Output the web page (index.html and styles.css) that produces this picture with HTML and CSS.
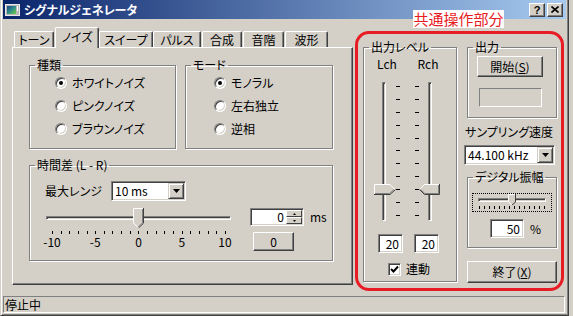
FILE: index.html
```html
<!DOCTYPE html>
<html lang="ja">
<head>
  <meta charset="UTF-8">
  <title>シグナルジェネレータ</title>
  <link rel="stylesheet" href="styles.css">
</head>
<body>
  <div class="window">
    <div class="titlebar">
      <svg class="app-icon" width="15" height="12" viewBox="0 0 15 12">
        <defs>
          <linearGradient id="iconGrad" x1="0" y1="0" x2="1" y2="1">
            <stop offset="0" stop-color="#1c3f8c"/>
            <stop offset="0.5" stop-color="#2f8f8a"/>
            <stop offset="1" stop-color="#6fcf3f"/>
          </linearGradient>
        </defs>
        <rect x="0.5" y="0.5" width="14" height="11" fill="#b8b8b8" stroke="#e8e8e8"/>
        <rect x="2" y="2" width="9" height="8" fill="url(#iconGrad)"/>
        <rect x="12" y="2" width="1" height="5" fill="#fff"/>
      </svg>
      <span class="title">シグナルジェネレータ</span>
      <div class="caption-btns">
        <span class="cap-btn help">?</span>
        <span class="cap-btn">
          <svg width="8" height="7" viewBox="0 0 8 7"><path d="M0.5 0.5L7.5 6.5M7.5 0.5L0.5 6.5" stroke="#000" stroke-width="1.6"/></svg>
        </span>
      </div>
    </div>

    <div class="note">共通操作部分</div>

    <div class="client">
      <!-- tab control -->
      <div class="tabctl">
        <div class="tabs">
          <div class="tab">トーン</div>
          <div class="tab active">ノイズ</div>
          <div class="tab">スイープ</div>
          <div class="tab">パルス</div>
          <div class="tab">合成</div>
          <div class="tab">音階</div>
          <div class="tab">波形</div>
        </div>

        <div class="panel">
          <div class="panel-row">
            <fieldset class="group g-kind">
              <legend>種類</legend>
              <div class="radios">
                <label class="radio"><span class="radio-box checked"></span>ホワイトノイズ</label>
                <label class="radio"><span class="radio-box"></span>ピンクノイズ</label>
                <label class="radio"><span class="radio-box"></span>ブラウンノイズ</label>
              </div>
            </fieldset>

            <fieldset class="group g-mode">
              <legend>モード</legend>
              <div class="radios">
                <label class="radio"><span class="radio-box checked"></span>モノラル</label>
                <label class="radio"><span class="radio-box"></span>左右独立</label>
                <label class="radio"><span class="radio-box"></span>逆相</label>
              </div>
            </fieldset>
          </div>

          <fieldset class="group g-delay">
            <legend>時間差 (L - R)</legend>
            <div class="delay-body">
              <div class="range-row">
                <span class="range-label">最大レンジ</span>
                <div class="combo combo-range">
                  <span class="combo-text">10 ms</span>
                  <span class="combo-btn">
                    <svg width="7" height="4" viewBox="0 0 7 4"><path d="M0 0H7L3.5 4Z" fill="#000"/></svg>
                  </span>
                </div>
              </div>

              <div class="slider-row">
                <div class="hslider-wrap">
                  <div class="hslider">
                    <div class="htrack"></div>
                    <svg class="hthumb" style="left: 87px" width="11" height="20" viewBox="0 0 11 20">
                      <path d="M0 0H11V15L5.5 20L0 15Z" fill="#d4d0c8"/>
                      <path d="M0.5 15V0.5H10" stroke="#fff" fill="none"/>
                      <path d="M10.5 0V15.2L5.5 20" stroke="#404040" fill="none"/>
                      <path d="M9.5 1V14.8L5.3 19" stroke="#808080" fill="none"/>
                      <path d="M0.5 15L4.8 19.3" stroke="#fff" fill="none"/>
                    </svg>
                  </div>
                  <div class="hticks">
                    <i></i><i></i><i></i><i></i><i></i><i></i><i></i><i></i><i></i><i></i><i></i>
                    <i></i><i></i><i></i><i></i><i></i><i></i><i></i><i></i><i></i><i></i>
                  </div>
                  <div class="hlabels">
                    <span>-10</span><span>-5</span><span>0</span><span>5</span><span>10</span>
                  </div>
                </div>

                <div class="spin-col">
                  <div class="spin-line">
                    <div class="spin">
                      <span class="spin-val">0</span>
                      <span class="spin-btns">
                        <span class="spin-btn"><svg width="3" height="2" viewBox="0 0 3 2"><path d="M1.5 0L3 2H0Z" fill="#000"/></svg></span>
                        <span class="spin-btn"><svg width="3" height="2" viewBox="0 0 3 2"><path d="M0 0H3L1.5 2Z" fill="#000"/></svg></span>
                      </span>
                    </div>
                    <span class="unit">ms</span>
                  </div>
                  <div class="btn btn-zero">0</div>
                </div>
              </div>
            </div>
          </fieldset>
        </div>
      </div>

      <!-- common controls (annotated in red) -->
      <div class="common">
        <fieldset class="group g-level">
          <legend>出力レベル</legend>
          <div class="ch-labels"><span>Lch</span><span>Rch</span></div>
          <div class="vsliders">
            <div class="vslider">
              <div class="vtrack"></div>
              <svg class="vthumb" style="top: 102px" width="22" height="11" viewBox="0 0 22 11">
                <path d="M0 0H16L21.5 5.5L16 11H0Z" fill="#d4d0c8"/>
                <path d="M0.5 10V0.5H16L21 5.5" stroke="#fff" fill="none"/>
                <path d="M0 10.5H16L21.5 5.5" stroke="#404040" fill="none"/>
                <path d="M1 9.5H15.6L20 5.5" stroke="#808080" fill="none"/>
              </svg>
            </div>
            <div class="dashes">
              <i></i><i></i><i></i><i></i><i></i><i></i><i></i><i></i><i></i><i></i><i></i>
            </div>
            <div class="dashes dashes-r">
              <i></i><i></i><i></i><i></i><i></i><i></i><i></i><i></i><i></i><i></i><i></i>
            </div>
            <div class="vslider vslider-r">
              <div class="vtrack"></div>
              <svg class="vthumb" style="top: 102px" width="21" height="11" viewBox="0 0 21 11">
                <path d="M21 0H5.5L0 5.5L5.5 11H21Z" fill="#d4d0c8"/>
                <path d="M5.5 0.5H20.5M5.5 0.5L0.5 5.5" stroke="#fff" fill="none"/>
                <path d="M20.5 0V10.5H5.5L0.5 5.5" stroke="#404040" fill="none"/>
                <path d="M19.5 1V9.5H5.9L1.5 5.5" stroke="#808080" fill="none"/>
              </svg>
            </div>
          </div>
          <div class="level-edits">
            <div class="edit">20</div>
            <div class="edit">20</div>
          </div>
          <label class="link">
            <span class="check">
              <svg width="9" height="9" viewBox="0 0 9 9"><path d="M1 4L3.5 6.5L8 1.5" stroke="#000" stroke-width="2" fill="none"/></svg>
            </span>
            連動
          </label>
        </fieldset>

        <div class="side">
          <fieldset class="group g-out">
            <legend>出力</legend>
            <div class="btn btn-start">開始(<u>S</u>)</div>
            <div class="indicator"></div>
          </fieldset>

          <div class="rate-label">サンプリング速度</div>
          <div class="combo combo-rate">
            <span class="combo-text">44.100 kHz</span>
            <span class="combo-btn">
              <svg width="7" height="4" viewBox="0 0 7 4"><path d="M0 0H7L3.5 4Z" fill="#000"/></svg>
            </span>
          </div>

          <fieldset class="group g-amp">
            <legend>デジタル振幅</legend>
            <div class="amp-focus">
              <div class="amp-track"></div>
              <svg class="amp-thumb" style="left: 35px" width="8" height="11" viewBox="0 0 8 11">
                <path d="M0 0H8V8L4 11L0 8Z" fill="#d4d0c8"/>
                <path d="M0.5 8V0.5H7" stroke="#fff" fill="none"/>
                <path d="M7.5 0V8.2L4 11" stroke="#404040" fill="none"/>
                <path d="M0.5 8L3.5 10.5" stroke="#fff" fill="none"/>
              </svg>
              <div class="amp-ticks">
                <i></i><i></i><i></i><i></i><i></i><i></i><i></i><i></i><i></i><i></i><i></i><i></i><i></i><i></i>
              </div>
            </div>
            <div class="amp-line">
              <div class="edit edit-amp">50</div>
              <span class="unit">%</span>
            </div>
          </fieldset>

          <div class="btn btn-quit">終了(<u>X</u>)</div>
        </div>
      </div>
    </div>

    <div class="statusbar">停止中</div>
  </div>
</body>
</html>
```

FILE: styles.css
```css
* {
  box-sizing: border-box;
  margin: 0;
  padding: 0;
}

body {
  background: #d4d0c8;
  font-family: "Noto Sans CJK JP", "Noto Sans", sans-serif;
  font-size: 12px;
  line-height: 14px;
  font-feature-settings: "palt";
  color: #000;
}

.window {
  position: relative;
  width: 569px;
  height: 316px;
  display: flex;
  flex-direction: column;
  background: #d4d0c8;
  border-left: 1px solid #d4d0c8;
  border-right: 1px solid #404040;
  border-bottom: 1px solid #404040;
  box-shadow: inset 1px 0 #fff, inset -1px -1px #808080;
  padding: 0 2px 2px 2px;
}

/* title bar */
.titlebar {
  height: 19px;
  flex-shrink: 0;
  display: flex;
  align-items: center;
  padding: 0 3px 0 2px;
  background: linear-gradient(to right, #0a246a, #a6caf0);
  color: #fff;
}

.app-icon {
  margin-right: 4px;
}

.title {
  font-weight: bold;
}

.caption-btns {
  margin-left: auto;
  display: flex;
  gap: 2px;
}

.cap-btn {
  width: 16px;
  height: 14px;
  display: flex;
  align-items: center;
  justify-content: center;
  background: #d4d0c8;
  border: 1px solid;
  border-color: #fff #404040 #404040 #fff;
  box-shadow: inset -1px -1px #808080;
  color: #000;
}

.cap-btn.help {
  font-family: "Liberation Sans", sans-serif;
  font-weight: bold;
  font-size: 11px;
}

.note {
  position: absolute;
  top: 10px;
  left: 412px;
  width: 91px;
  height: 18px;
  background: #fff;
  color: #e81c24;
  font-size: 15px;
  line-height: 18px;
  text-align: center;
  font-feature-settings: normal;
}

/* client area */
.client {
  flex: 1;
  display: flex;
  align-items: flex-start;
  padding: 8px 0 0 9px;
}

.tabctl {
  width: 341px;
}

.tabs {
  display: flex;
  align-items: flex-end;
  height: 20px;
  position: relative;
  z-index: 1;
}

.tab {
  height: 16px;
  border: 1px solid #fff;
  border-bottom: none;
  border-right-color: #404040;
  border-radius: 2px 2px 0 0;
  box-shadow: inset -1px 0 #808080;
  text-align: center;
  line-height: 15px;
  background: #d4d0c8;
}

.tab:nth-child(1) { width: 40px; margin-left: 2px; }
.tab:nth-child(2) { width: 44px; margin-left: 1px; }
.tab:nth-child(3) { width: 54px; }
.tab:nth-child(4) { width: 48px; }
.tab:nth-child(5) { width: 40px; margin-left: 1px; }
.tab:nth-child(6) { width: 41px; margin-left: 1px; }
.tab:nth-child(7) { width: 43px; margin-left: 1px; }

.tab.active {
  height: 21px;
  margin-bottom: -1px;
  padding-top: 1px;
}

.panel {
  height: 238px;
  border: 1px solid;
  border-color: #fff #404040 #404040 #fff;
  box-shadow: inset -1px -1px #808080;
  padding: 10px 0 0 16px;
}

.panel-row {
  display: flex;
  gap: 9px;
}

/* group boxes */
.group {
  border: 1px solid #808080;
  box-shadow: inset 1px 1px #fff, 1px 1px #fff;
  padding: 0;
  min-width: 0;
}

.group legend {
  margin-left: 5px;
  padding: 0 2px;
  line-height: 14px;
}

.g-kind { width: 147px; height: 91px; }
.g-mode { width: 148px; height: 91px; }
.g-delay { width: 304px; height: 103px; margin-top: 9px; }

.radios {
  margin-top: -1px;
  padding-left: 25px;
}

.g-mode .radios {
  padding-left: 28px;
}

.radio {
  height: 23px;
  display: flex;
  align-items: center;
}

.radio-box {
  width: 12px;
  height: 12px;
  margin-right: 5px;
  border-radius: 50%;
  background: #fff;
  border: 1px solid;
  border-color: #808080 #fff #fff #808080;
  box-shadow: inset 1px 1px #404040, inset -1px -1px #d4d0c8;
  display: flex;
  align-items: center;
  justify-content: center;
}

.radio-box.checked::after {
  content: '';
  width: 4px;
  height: 4px;
  border-radius: 50%;
  background: #000;
}

/* time difference group */
.delay-body {
  padding: 9px 0 0 15px;
}

.range-row {
  display: flex;
  align-items: center;
}

.range-label {
  width: 66px;
}

.combo {
  height: 20px;
  display: flex;
  background: #fff;
  border: 1px solid;
  border-color: #808080 #fff #fff #808080;
  box-shadow: inset 1px 1px #404040, inset -1px -1px #d4d0c8;
  padding: 1px;
}

.combo-range { width: 75px; }

.combo-text {
  flex: 1;
  padding-left: 2px;
  line-height: 16px;
}

.combo-btn {
  width: 16px;
  display: flex;
  align-items: center;
  justify-content: center;
  background: #d4d0c8;
  border: 1px solid;
  border-color: #d4d0c8 #404040 #404040 #d4d0c8;
  box-shadow: inset 1px 1px #fff, inset -1px -1px #808080;
}

.slider-row {
  display: flex;
  margin-top: 7px;
}

.hslider-wrap {
  width: 185px;
  margin-left: 1px;
}

.hslider {
  position: relative;
  height: 20px;
}

.htrack {
  position: relative;
  top: 8px;
  height: 4px;
  background: #d4d0c8;
  border: 1px solid;
  border-color: #808080 #fff #fff #808080;
  box-shadow: inset 1px 1px #404040;
}

.hthumb {
  position: absolute;
  top: 0;
}

.hticks {
  display: flex;
  justify-content: space-between;
  width: 174px;
  margin: 3px 0 0 6px;
}

.hticks i,
.amp-ticks i {
  width: 1px;
  height: 3px;
  background: #000;
}

.hlabels {
  display: flex;
  justify-content: space-between;
  width: 197px;
  margin: 1px 0 0 -6px;
}

.hlabels span {
  width: 24px;
  text-align: center;
}

.spin-col {
  margin-left: 19px;
}

.spin-line {
  display: flex;
  align-items: center;
}

.spin {
  width: 54px;
  height: 18px;
  display: flex;
  background: #fff;
  border: 1px solid;
  border-color: #808080 #fff #fff #808080;
  box-shadow: inset 1px 1px #404040, inset -1px -1px #d4d0c8;
  padding: 1px;
}

.spin-val {
  flex: 1;
  text-align: right;
  padding-right: 2px;
  line-height: 14px;
}

.spin-btns {
  width: 16px;
  display: flex;
  flex-direction: column;
}

.spin-btn {
  flex: 1;
  display: flex;
  align-items: center;
  justify-content: center;
  background: #d4d0c8;
  border: 1px solid;
  border-color: #fff #404040 #404040 #fff;
}

.unit {
  margin-left: 6px;
}

.btn {
  display: flex;
  align-items: center;
  justify-content: center;
  background: #d4d0c8;
  border: 1px solid;
  border-color: #fff #404040 #404040 #fff;
  box-shadow: inset -1px -1px #808080;
}

.btn-zero {
  width: 41px;
  height: 19px;
  margin: 6px 0 0 3px;
}

/* red annotated area */
.common {
  width: 209px;
  height: 260px;
  margin: 4px 0 0 2px;
  border: 3px solid #e81c24;
  border-radius: 14px;
  display: flex;
  align-items: flex-start;
  padding: 6px 0 0 5px;
}

.g-level {
  width: 94px;
  height: 242px;
}

.ch-labels {
  display: flex;
  gap: 17px;
  padding-left: 11px;
  margin-top: 3px;
}

.ch-labels span {
  width: 24px;
  text-align: center;
}

.vsliders {
  display: flex;
  height: 139px;
  margin-top: 11px;
  padding-left: 10px;
}

.vslider {
  position: relative;
  width: 22px;
}

.vtrack {
  width: 4px;
  height: 100%;
  margin-left: 8px;
  border: 1px solid;
  border-color: #808080 #fff #fff #808080;
  box-shadow: inset 1px 1px #404040;
}

.vslider-r {
  width: 21px;
}

.vslider-r .vtrack {
  margin-left: 9px;
}

.vthumb {
  position: absolute;
  left: 0;
}

.dashes {
  width: 5px;
  display: flex;
  flex-direction: column;
  justify-content: space-between;
  padding: 4px 0 5px;
}

.dashes i {
  width: 4px;
  height: 1px;
  background: #000;
}

.dashes-r {
  width: 4px;
  margin-left: 14px;
}

.level-edits {
  display: flex;
  gap: 11px;
  margin-top: 13px;
  padding-left: 14px;
}

.edit {
  height: 19px;
  width: 25px;
  background: #fff;
  border: 1px solid;
  border-color: #808080 #fff #fff #808080;
  box-shadow: inset 1px 1px #404040, inset -1px -1px #d4d0c8;
  text-align: right;
  padding-right: 3px;
  line-height: 17px;
}

.link {
  display: flex;
  align-items: center;
  margin-top: 9px;
  padding-left: 24px;
  gap: 5px;
}

.check {
  width: 13px;
  height: 13px;
  display: flex;
  align-items: center;
  justify-content: center;
  background: #fff;
  border: 1px solid;
  border-color: #808080 #fff #fff #808080;
  box-shadow: inset 1px 1px #404040, inset -1px -1px #d4d0c8;
}

.side {
  width: 90px;
  margin-left: 10px;
}

.g-out {
  width: 90px;
  height: 78px;
}

.btn-start {
  width: 66px;
  height: 21px;
  margin: 2px 0 0 9px;
}

.indicator {
  width: 63px;
  height: 19px;
  margin: 11px 0 0 11px;
  border: 1px solid;
  border-color: #808080 #fff #fff #808080;
}

.rate-label {
  margin: 7px 0 0 -2px;
  white-space: nowrap;
}

.combo-rate {
  width: 91px;
  margin: 6px 0 0 -3px;
}

.g-amp {
  width: 90px;
  height: 78px;
  margin-top: 5px;
}

.amp-focus {
  position: relative;
  width: 80px;
  height: 19px;
  margin: 9px 0 0 4px;
  border: 1px dotted #000;
  padding: 4px 0 0 5px;
}

.amp-track {
  width: 68px;
  height: 4px;
  border: 1px solid;
  border-color: #808080 #fff #fff #808080;
  box-shadow: inset 1px 1px #404040;
}

.amp-thumb {
  position: absolute;
  top: 0;
}

.amp-ticks {
  display: flex;
  justify-content: space-between;
  width: 66px;
  margin: 4px 0 0 1px;
}

.amp-line {
  display: flex;
  align-items: center;
  margin: 7px 0 0 22px;
}

.edit-amp {
  width: 34px;
}

.unit + .unit {
  margin-left: 4px;
}

.btn-quit {
  width: 90px;
  height: 22px;
  margin-top: 13px;
}

/* status bar */
.statusbar {
  height: 17px;
  flex-shrink: 0;
  margin-right: 1px;
  border: 1px solid;
  border-color: #808080 #fff #fff #808080;
  padding-left: 1px;
  line-height: 15px;
}
```
